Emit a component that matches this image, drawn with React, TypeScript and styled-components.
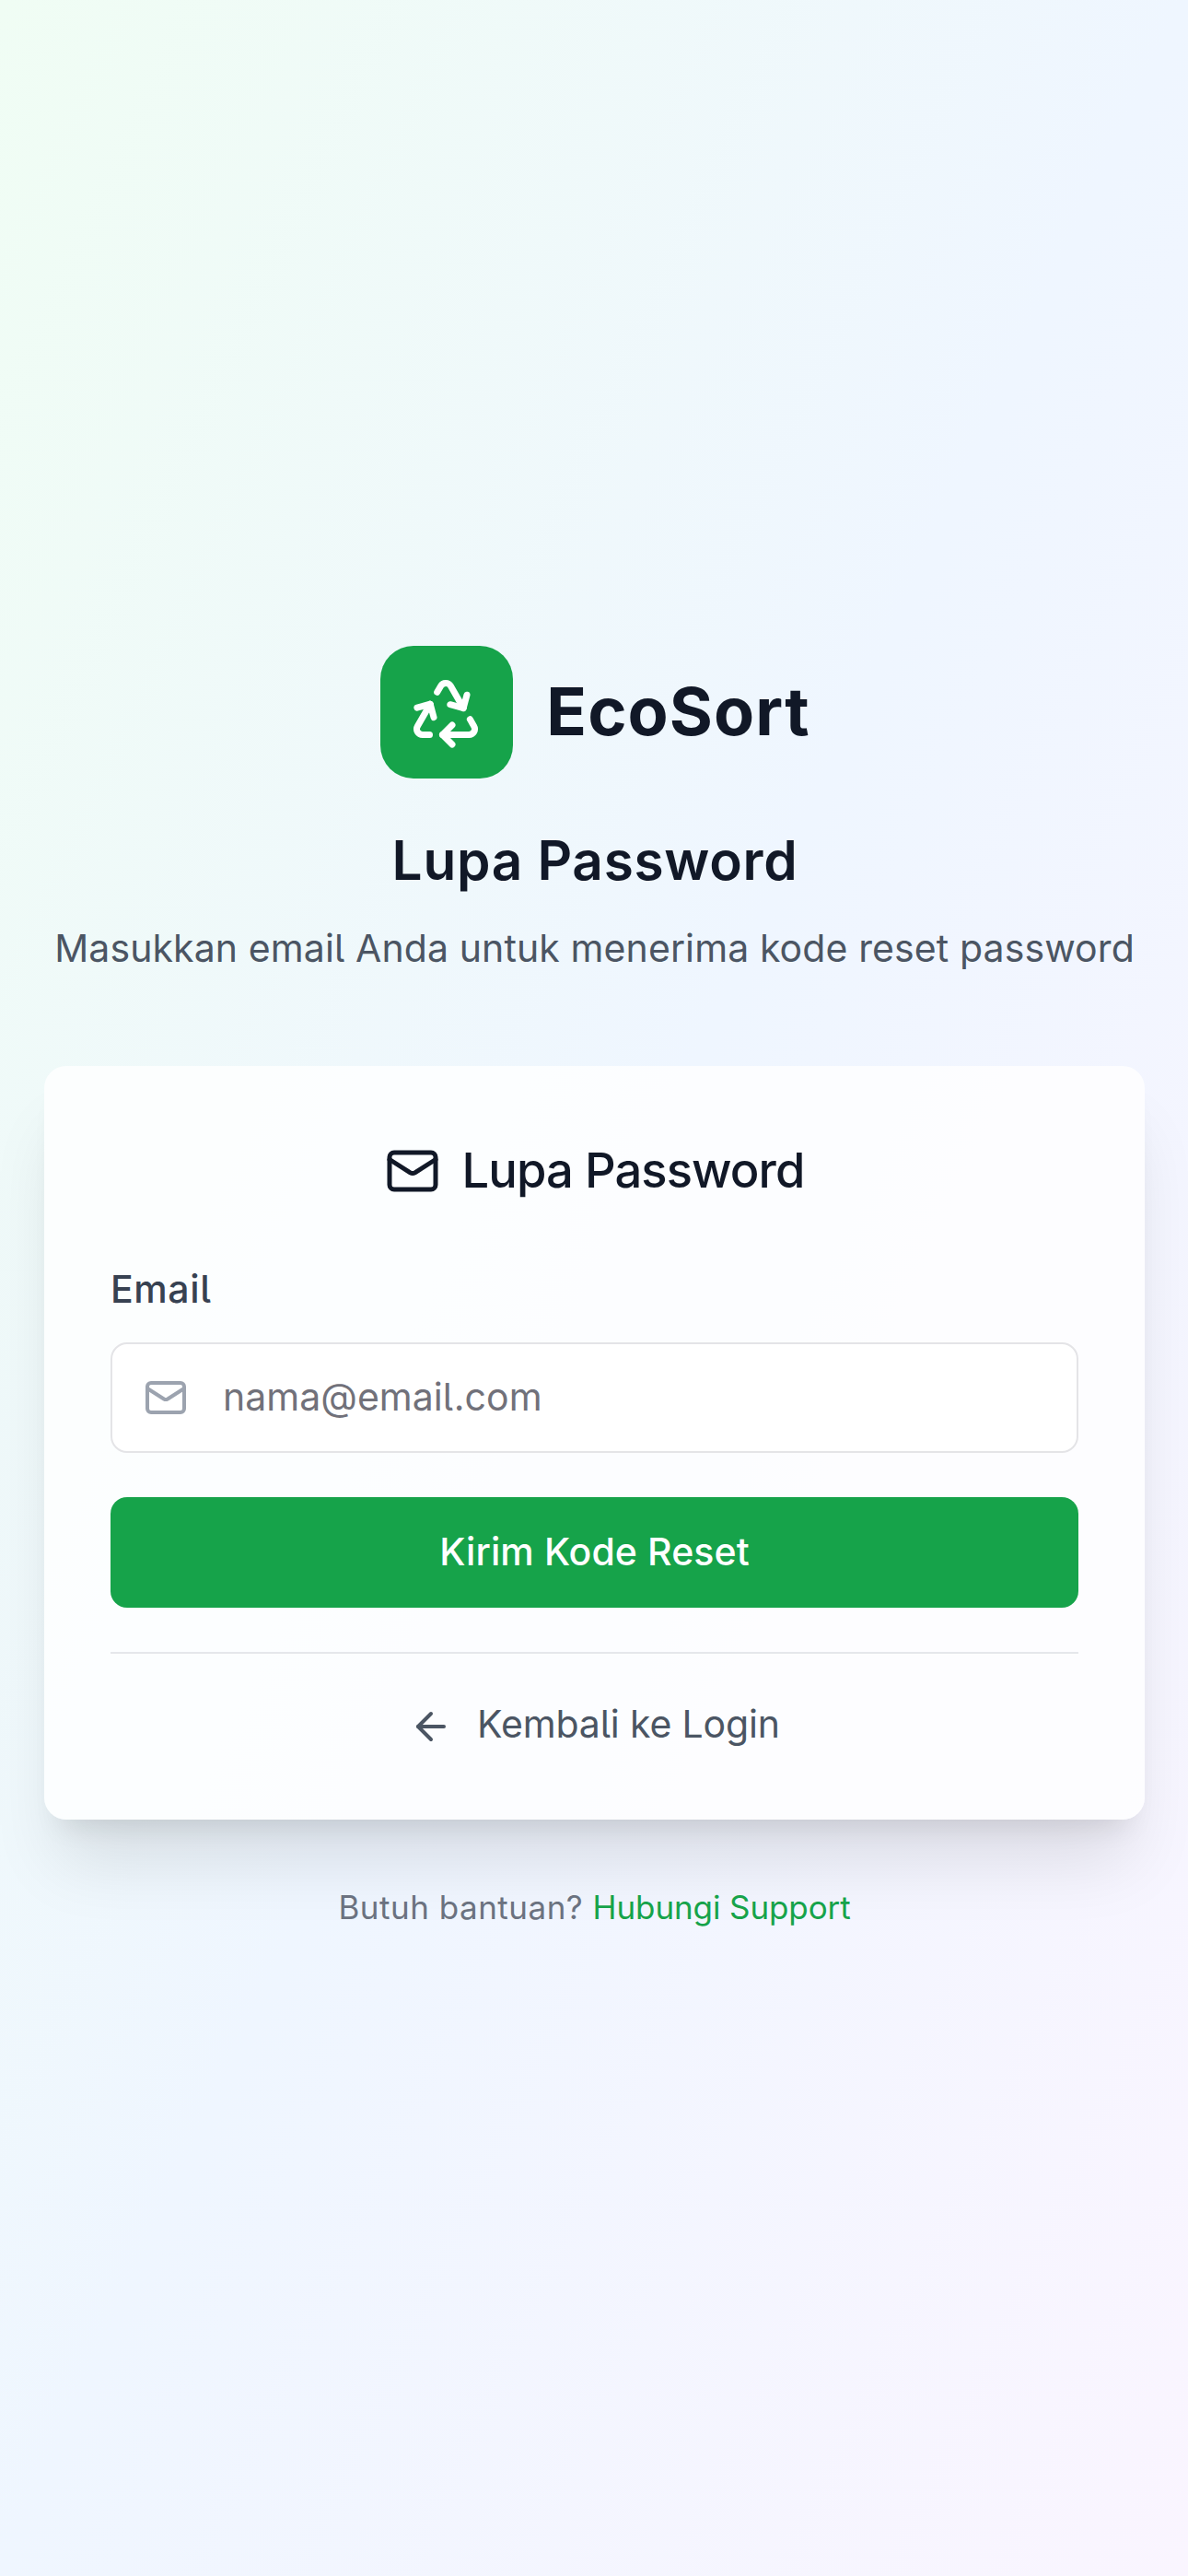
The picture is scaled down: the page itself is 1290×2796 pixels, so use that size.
import React from 'react';
import styled, { createGlobalStyle } from 'styled-components';

const GlobalStyle = createGlobalStyle`
  *, *::before, *::after { box-sizing: border-box; }
  body { margin: 0; }
  h1, h2, h3, p { margin: 0; }
  body, input, button {
    font-family: Inter, "Liberation Sans", sans-serif;
    font-feature-settings: "cv05";
  }
`;

const Page = styled.main`
  display: flex;
  flex-direction: column;
  min-height: 2796px;
  padding: 701px 47px 0 48px;
  background: linear-gradient(to bottom right, #f0fdf4, #eff6ff, #faf5ff);
`;

const Header = styled.header`
  display: flex;
  flex-direction: column;
  align-items: center;
  margin-bottom: 96px;
`;

const Brand = styled.div`
  display: flex;
  align-items: center;
  gap: 36px;
  padding-left: 2px;
  margin-bottom: 47px;
`;

const BrandMark = styled.div`
  display: flex;
  align-items: center;
  justify-content: center;
  width: 144px;
  height: 144px;
  padding-right: 2px;
  border-radius: 36px;
  background: #16a34a;
  color: #fff;
`;

const BrandName = styled.h1`
  padding-bottom: 3px;
  font-size: 72px;
  font-weight: 700;
  line-height: 96px;
  letter-spacing: 1.1px;
  color: #111827;
`;

const PageTitle = styled.h2`
  padding-left: 1px;
  font-size: 58.5px;
  font-weight: 600;
  line-height: 84px;
  letter-spacing: 0.7px;
  color: #111827;
`;

const Subtitle = styled.p`
  margin-top: 21px;
  font-size: 41px;
  line-height: 64px;
  letter-spacing: 0.106px;
  white-space: nowrap;
  color: #4b5563;
`;

const Card = styled.section`
  display: flex;
  flex-direction: column;
  height: 818px;
  padding: 84px 72px 72px;
  border-radius: 24px;
  background: rgba(255, 255, 255, 0.8);
  box-shadow: 0 60px 75px -15px rgba(0, 0, 0, 0.1), 0 24px 30px -18px rgba(0, 0, 0, 0.1);
`;

const CardTitle = styled.h3`
  display: flex;
  align-items: center;
  justify-content: center;
  gap: 24px;
  height: 60px;
  font-size: 52.5px;
  font-weight: 500;
  line-height: 58px;
  letter-spacing: -0.936px;
  color: #111827;

  span { padding-bottom: 2px; }
`;

const Form = styled.form`
  display: flex;
  flex-direction: column;
  margin-top: 77px;
`;

const Label = styled.label`
  font-size: 41px;
  font-weight: 500;
  line-height: 42px;
  letter-spacing: 0.6px;
  color: #374151;
`;

const Field = styled.div`
  display: flex;
  align-items: center;
  gap: 38px;
  height: 120px;
  margin: 37px 0 48px;
  padding: 0 36px 0 34px;
  border: 2px solid #e4e4e7;
  border-radius: 18px;
  background: #fff;
  color: #9ca3af;
`;

const Input = styled.input`
  flex: 1;
  min-width: 0;
  height: 100%;
  padding: 0 0 2px;
  border: 0;
  outline: 0;
  background: transparent;
  font-size: 41px;
  letter-spacing: 0.03px;
  color: #111827;

  &::placeholder { color: #71717a; opacity: 1; }
`;

const Submit = styled.button`
  height: 120px;
  padding: 0 0 2px;
  border: 0;
  border-radius: 18px;
  background: #16a34a;
  font-size: 41px;
  font-weight: 500;
  letter-spacing: 0.1px;
  color: #fff;
`;

const CardFooter = styled.div`
  display: flex;
  justify-content: center;
  margin-top: 48px;
  padding-top: 44px;
  border-top: 2px solid #e5e7eb;
`;

const BackLink = styled.a`
  display: flex;
  align-items: center;
  gap: 26px;
  height: 64px;
  font-size: 41px;
  line-height: 64px;
  letter-spacing: -0.146px;
  color: #4b5563;

  svg { margin-top: 6px; }
`;

const Help = styled.p`
  margin-top: 68px;
  font-size: 35px;
  line-height: 54px;
  letter-spacing: 0.5px;
  text-align: center;
  color: #6b7280;
`;

const SupportLink = styled.a`
  letter-spacing: -0.1px;
  color: #16a34a;
`;

const Glyph = styled.svg.attrs({
  viewBox: '0 0 24 24',
  fill: 'none',
  stroke: 'currentColor',
  strokeWidth: 2,
  strokeLinecap: 'round',
  strokeLinejoin: 'round',
})<{ $size: number }>`
  flex: none;
  width: ${(p) => p.$size}px;
  height: ${(p) => p.$size}px;
`;

const MailIcon = ({ size }: { size: number }) => (
  <Glyph $size={size}>
    <path d="m22 7-8.991 5.727a2 2 0 0 1-2.009 0L2 7" />
    <rect x="2" y="4" width="20" height="16" rx="2" />
  </Glyph>
);

const ArrowLeftIcon = ({ size }: { size: number }) => (
  <Glyph $size={size}>
    <path d="m12 19-7-7 7-7" />
    <path d="M19 12H5" />
  </Glyph>
);

const RecycleIcon = ({ size }: { size: number }) => (
  <Glyph $size={size}>
    <path d="M7 19H4.815a1.83 1.83 0 0 1-1.57-.881 1.785 1.785 0 0 1-.004-1.784L7.196 9.5" />
    <path d="M11 19h8.203a1.83 1.83 0 0 0 1.556-.89 1.784 1.784 0 0 0 0-1.775l-1.226-2.12" />
    <path d="m14 16-3 3 3 3" />
    <path d="M8.293 13.596 7.196 9.5 3.1 10.598" />
    <path d="m9.344 5.811 1.093-1.892A1.83 1.83 0 0 1 11.985 3a1.784 1.784 0 0 1 1.546.888l3.943 6.843" />
    <path d="m13.378 9.633 4.096 1.098 1.097-4.096" />
  </Glyph>
);

export default function App() {
  return (
    <>
      <GlobalStyle />
      <Page>
        <Header>
          <Brand>
            <BrandMark>
              <RecycleIcon size={84} />
            </BrandMark>
            <BrandName>EcoSort</BrandName>
          </Brand>
          <PageTitle>Lupa Password</PageTitle>
          <Subtitle>Masukkan email Anda untuk menerima kode reset password</Subtitle>
        </Header>
        <Card>
          <CardTitle>
            <MailIcon size={60} />
            <span>Lupa Password</span>
          </CardTitle>
          <Form onSubmit={(e) => e.preventDefault()}>
            <Label htmlFor="email">Email</Label>
            <Field>
              <MailIcon size={48} />
              <Input id="email" type="email" placeholder="nama@email.com" />
            </Field>
            <Submit type="submit">Kirim Kode Reset</Submit>
          </Form>
          <CardFooter>
            <BackLink>
              <ArrowLeftIcon size={48} />
              Kembali ke Login
            </BackLink>
          </CardFooter>
        </Card>
        <Help>
          Butuh bantuan? <SupportLink>Hubungi Support</SupportLink>
        </Help>
      </Page>
    </>
  );
}
